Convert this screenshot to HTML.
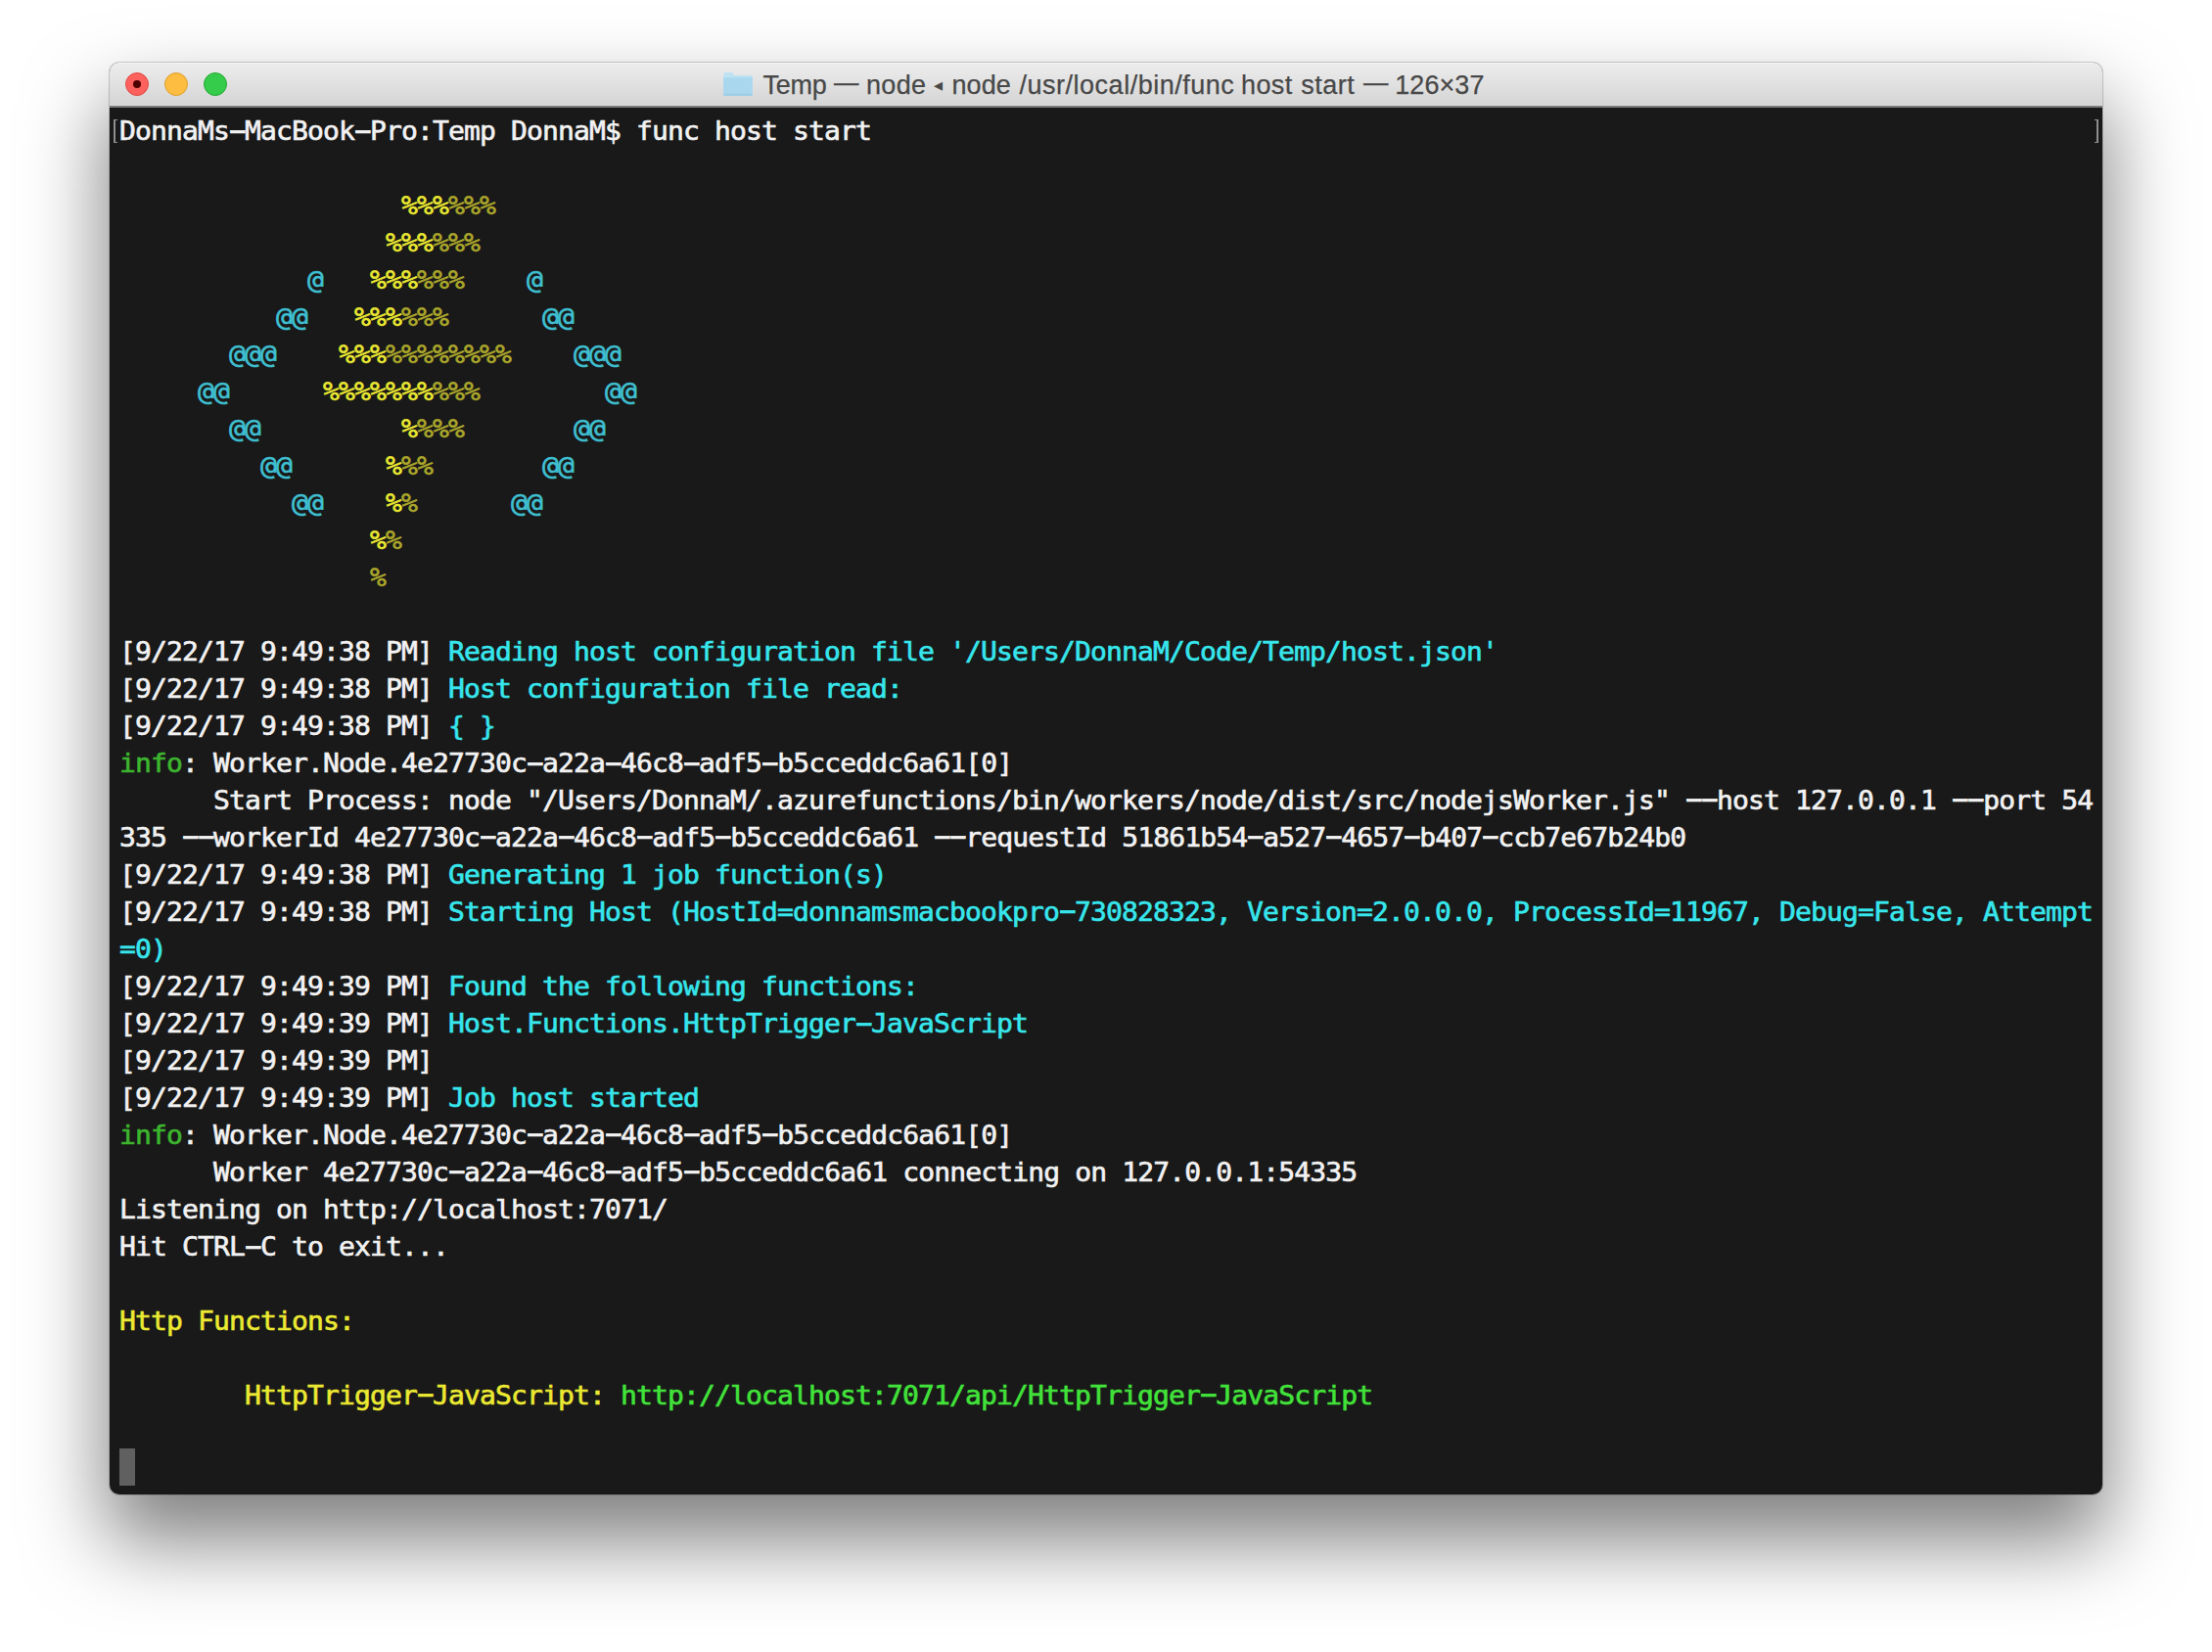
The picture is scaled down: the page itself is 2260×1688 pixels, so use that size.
<!DOCTYPE html>
<html lang="en"><head><meta charset="utf-8"><title>Terminal</title>
<style>
html,body{margin:0;padding:0;background:#fff;}
body{width:2260px;height:1688px;position:relative;overflow:hidden;font-family:"Liberation Sans",sans-serif;}
#win{position:absolute;left:112px;top:64px;width:2036px;height:1463px;border-radius:10px;background:#191919;
 box-shadow:0 0 0 1px rgba(0,0,0,.18),0 44px 82px 4px rgba(0,0,0,.50);}
#bar{position:absolute;left:0;top:0;width:100%;height:44px;border-radius:10px 10px 0 0;
 background:linear-gradient(#ececec,#e7e7e7 25%,#d4d4d4 100%);box-shadow:inset 0 1px 0 #f5f5f5,inset 0 -1px 0 #dbdbdb;}
#barline{position:absolute;left:0;top:44px;width:100%;height:2px;background:#7d7d7d;}
.tl{position:absolute;top:10px;width:24px;height:24px;border-radius:50%;box-sizing:border-box;}
#tr{left:16px;background:#fc615d;border:1px solid #de4a43;}
#tr:after{content:"";position:absolute;left:7px;top:7px;width:8px;height:8px;border-radius:50%;background:#4d0000;}
#ty{left:56px;background:#fdbd41;border:1px solid #dc9f2f;}
#tg{left:96px;background:#35cb4b;border:1px solid #24a833;}
#title{position:absolute;left:0;top:7px;height:32px;line-height:32px;font-size:27px;color:#484848;white-space:pre;-webkit-text-stroke:0.25px;}
#title span{position:absolute;top:0;}
#title span.tri{font-size:18px;top:0px;-webkit-text-stroke:0;}
#title span.dash{top:-3px;transform:scaleX(.94);transform-origin:0 50%;}
#folder{position:absolute;left:626px;top:9px;width:32px;height:26px;}
#term{position:absolute;left:10px;top:52.2px;margin:0;font-family:"DejaVu Sans Mono","Liberation Mono",monospace;font-size:28px;line-height:40.8602px;transform:translateY(0px) scaleY(0.93);transform-origin:0 0;letter-spacing:-0.857px;color:#f2f2f2;white-space:pre;-webkit-text-stroke:0.65px;font-variant-ligatures:none;}
#term b{display:inline-block;font-weight:normal;transform:translateY(-1.1px) scale(2,1.2);}
.w{color:#f2f2f2}.c{color:#37e6ec}.g{color:#3db52f}.y{color:#ece932}.d{color:#aca72b}.a{color:#3fc0d2}.u{color:#42e23a}
#lb,#rb{position:absolute;top:58px;width:4px;height:24px;box-sizing:border-box;border:2px solid #8e8e8e;}
#lb{left:4px;border-right:none;border-width:1px 0 1px 2px;}
#rb{left:2028px;border-left:none;border-width:1px 2px 1px 0;}
#cur{position:absolute;left:10px;top:1416px;width:16px;height:38px;background:#606060;}
</style></head><body>
<div id="win">
<div id="bar"></div><div id="barline"></div>
<div class="tl" id="tr"></div><div class="tl" id="ty"></div><div class="tl" id="tg"></div>
<svg id="folder" viewBox="0 0 32 26"><path d="M1.1 3 Q1.1 1 3.1 1 H9.2 Q10.2 1 10.9 1.9 L12.2 3.5 Q12.8 4.1 13.7 4.1 H29 Q30.8 4.1 30.8 5.9 V23 Q30.8 24.9 29 24.9 H3 Q1.1 24.9 1.1 23 Z" fill="#bfe2f3"/><path d="M1.1 6.2 H30.8 V23.2 Q30.8 24.9 29 24.9 H3 Q1.1 24.9 1.1 23.2 Z" fill="#a9d7ee"/><path d="M1.1 22.6 H30.8 V23.2 Q30.8 24.9 29 24.9 H3 Q1.1 24.9 1.1 23.2 Z" fill="#a0cee6"/></svg>
<div id="title"><span style="left:667.4px;letter-spacing:-0.19px">Temp</span> <span class="dash" style="left:739.6px;letter-spacing:0.00px">—</span> <span style="left:772.9px;letter-spacing:0.39px">node</span> <span class="tri" style="left:841.9px;letter-spacing:0.00px">◂</span> <span style="left:860.4px;letter-spacing:0.12px">node</span> <span style="left:929.6px;letter-spacing:0.50px">/usr/local/bin/func</span> <span style="left:1155.9px;letter-spacing:0.47px">host</span> <span style="left:1217.3px;letter-spacing:0.46px">start</span> <span class="dash" style="left:1280.8px;letter-spacing:0.00px">—</span> <span style="left:1313.2px;letter-spacing:0.08px">126×37</span></div>
<div id="lb"></div><div id="rb"></div>
<pre id="term"><span class="w">DonnaMs<b>-</b>MacBook<b>-</b>Pro:Temp DonnaM$ func host start</span>

                  <span class="y">%%%</span><span class="d">%%%</span>
                 <span class="y">%%%</span><span class="d">%%%</span>
            <span class="a">@</span>   <span class="y">%%%</span><span class="d">%%%</span>    <span class="a">@</span>
          <span class="a">@@</span>   <span class="y">%%%</span><span class="d">%%%</span>      <span class="a">@@</span>
       <span class="a">@@@</span>    <span class="y">%%%</span><span class="d">%%%%%%%%</span>    <span class="a">@@@</span>
     <span class="a">@@</span>      <span class="y">%%%%%%%</span><span class="d">%%%</span>        <span class="a">@@</span>
       <span class="a">@@</span>         <span class="y">%</span><span class="d">%%%</span>       <span class="a">@@</span>
         <span class="a">@@</span>      <span class="y">%</span><span class="d">%%</span>       <span class="a">@@</span>
           <span class="a">@@</span>    <span class="y">%</span><span class="d">%</span>      <span class="a">@@</span>
                <span class="y">%</span><span class="d">%</span>
                <span class="d">%</span>

<span class="w">[9/22/17 9:49:38 PM] </span><span class="c">Reading host configuration file '/Users/DonnaM/Code/Temp/host.json'</span>
<span class="w">[9/22/17 9:49:38 PM] </span><span class="c">Host configuration file read:</span>
<span class="w">[9/22/17 9:49:38 PM] </span><span class="c">{ }</span>
<span class="g">info</span><span class="w">: Worker.Node.4e27730c<b>-</b>a22a<b>-</b>46c8<b>-</b>adf5<b>-</b>b5cceddc6a61[0]</span>
<span class="w">      Start Process: node "/Users/DonnaM/.azurefunctions/bin/workers/node/dist/src/nodejsWorker.js" <b>-</b><b>-</b>host 127.0.0.1 <b>-</b><b>-</b>port 54</span>
<span class="w">335 <b>-</b><b>-</b>workerId 4e27730c<b>-</b>a22a<b>-</b>46c8<b>-</b>adf5<b>-</b>b5cceddc6a61 <b>-</b><b>-</b>requestId 51861b54<b>-</b>a527<b>-</b>4657<b>-</b>b407<b>-</b>ccb7e67b24b0</span>
<span class="w">[9/22/17 9:49:38 PM] </span><span class="c">Generating 1 job function(s)</span>
<span class="w">[9/22/17 9:49:38 PM] </span><span class="c">Starting Host (HostId=donnamsmacbookpro<b>-</b>730828323, Version=2.0.0.0, ProcessId=11967, Debug=False, Attempt</span>
<span class="c">=0)</span>
<span class="w">[9/22/17 9:49:39 PM] </span><span class="c">Found the following functions:</span>
<span class="w">[9/22/17 9:49:39 PM] </span><span class="c">Host.Functions.HttpTrigger<b>-</b>JavaScript</span>
<span class="w">[9/22/17 9:49:39 PM]</span>
<span class="w">[9/22/17 9:49:39 PM] </span><span class="c">Job host started</span>
<span class="g">info</span><span class="w">: Worker.Node.4e27730c<b>-</b>a22a<b>-</b>46c8<b>-</b>adf5<b>-</b>b5cceddc6a61[0]</span>
<span class="w">      Worker 4e27730c<b>-</b>a22a<b>-</b>46c8<b>-</b>adf5<b>-</b>b5cceddc6a61 connecting on 127.0.0.1:54335</span>
<span class="w">Listening on http://localhost:7071/</span>
<span class="w">Hit CTRL<b>-</b>C to exit...</span>

<span class="y">Http Functions:</span>

        <span class="y">HttpTrigger<b>-</b>JavaScript:</span> <span class="u">http://localhost:7071/api/HttpTrigger<b>-</b>JavaScript</span>

</pre>
<div id="cur"></div>
</div>
</body></html>
